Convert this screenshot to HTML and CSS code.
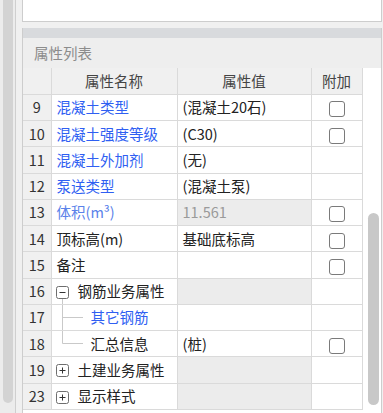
FILE: index.html
```html
<!DOCTYPE html>
<html lang="zh">
<head>
<meta charset="utf-8">
<title>属性列表</title>
<link rel="stylesheet" href="styles.css">
</head>
<body>
<div class="app">
  <div class="left-scroll"><div class="left-thumb"></div></div>
  <div class="main">
    <div class="top-panel"></div>
    <div class="prop-panel">
      <div class="band"></div>
      <div class="title">属性列表</div>
      <div class="grid-wrap">
        <table class="grid">
          <colgroup><col class="c-num"><col class="c-name"><col class="c-val"><col class="c-add"></colgroup>
          <tr class="head"><td></td><td>属性名称</td><td>属性值</td><td>附加</td></tr>
          <tr><td class="num">9</td><td class="name blue">混凝土类型</td><td class="val">(混凝土20石)</td><td class="add"><span class="cb"></span></td></tr>
          <tr><td class="num">10</td><td class="name blue">混凝土强度等级</td><td class="val">(C30)</td><td class="add"><span class="cb"></span></td></tr>
          <tr><td class="num">11</td><td class="name blue">混凝土外加剂</td><td class="val">(无)</td><td class="add"></td></tr>
          <tr><td class="num">12</td><td class="name blue">泵送类型</td><td class="val">(混凝土泵)</td><td class="add"></td></tr>
          <tr><td class="num">13</td><td class="name light-blue">体积(m³)</td><td class="val ro">11.561</td><td class="add"><span class="cb"></span></td></tr>
          <tr><td class="num">14</td><td class="name">顶标高(m)</td><td class="val">基础底标高</td><td class="add"><span class="cb"></span></td></tr>
          <tr><td class="num">15</td><td class="name">备注</td><td class="val"></td><td class="add"><span class="cb"></span></td></tr>
          <tr><td class="num">16</td><td class="name tree"><div class="tcell"><svg class="ico" width="26" height="27" viewBox="0 0 26 27"><line x1="10.5" y1="20" x2="10.5" y2="27" stroke="#c9c9c9"/><rect x="4.5" y="8.5" width="12" height="12" rx="2" fill="#fff" stroke="#6e6e6e"/><line x1="7.5" y1="14.5" x2="13.5" y2="14.5" stroke="#333"/></svg><span>钢筋业务属性</span></div></td><td class="val ro"></td><td class="add"></td></tr>
          <tr><td class="num">17</td><td class="name tree"><div class="tcell"><svg class="ico" width="39" height="27" viewBox="0 0 39 27"><line x1="10.5" y1="0" x2="10.5" y2="27" stroke="#c9c9c9"/><line x1="10.5" y1="13.5" x2="31" y2="13.5" stroke="#c9c9c9"/></svg><span class="blue">其它钢筋</span></div></td><td class="val"></td><td class="add"></td></tr>
          <tr><td class="num">18</td><td class="name tree"><div class="tcell"><svg class="ico" width="39" height="27" viewBox="0 0 39 27"><line x1="10.5" y1="0" x2="10.5" y2="13.5" stroke="#c9c9c9"/><line x1="10.5" y1="13.5" x2="31" y2="13.5" stroke="#c9c9c9"/></svg><span>汇总信息</span></div></td><td class="val">(桩)</td><td class="add"><span class="cb"></span></td></tr>
          <tr><td class="num">19</td><td class="name tree"><div class="tcell"><svg class="ico" width="26" height="27" viewBox="0 0 26 27"><rect x="4.5" y="8.5" width="12" height="12" rx="2" fill="#fff" stroke="#6e6e6e"/><line x1="7.5" y1="14.5" x2="13.5" y2="14.5" stroke="#333"/><line x1="10.5" y1="11.5" x2="10.5" y2="17.5" stroke="#333"/></svg><span>土建业务属性</span></div></td><td class="val ro"></td><td class="add"></td></tr>
          <tr><td class="num">23</td><td class="name tree"><div class="tcell"><svg class="ico" width="26" height="27" viewBox="0 0 26 27"><rect x="4.5" y="8.5" width="12" height="12" rx="2" fill="#fff" stroke="#6e6e6e"/><line x1="7.5" y1="14.5" x2="13.5" y2="14.5" stroke="#333"/><line x1="10.5" y1="11.5" x2="10.5" y2="17.5" stroke="#333"/></svg><span>显示样式</span></div></td><td class="val ro"></td><td class="add"></td></tr>
        </table>
        <div class="right-scroll"><div class="right-thumb"></div></div>
      </div>
    </div>
  </div>
</div>
</body>
</html>
```

FILE: styles.css
```css
html, body {
  margin: 0;
  padding: 0;
}
body {
  width: 383px;
  height: 413px;
  overflow: hidden;
  background: #efefef;
  font-family: "Microsoft YaHei", "Noto Sans CJK SC", "Noto Sans", sans-serif;
  font-size: 14.5px;
  color: #222;
}
.app {
  display: flex;
  height: 413px;
}
.left-scroll {
  width: 16px;
  flex: none;
  box-sizing: border-box;
  padding-left: 3px;
  background: #ececec;
  border-right: 1px solid #cfcfcf;
}
.left-thumb {
  width: 10px;
  height: 403px;
  background: #d3d3d3;
  border-radius: 0 0 5px 5px;
}
.main {
  flex: 1;
  min-width: 0;
  display: flex;
  flex-direction: column;
  background: #f0f0f0;
  padding-left: 6px;
}
.top-panel {
  height: 21px;
  flex: none;
  background: #fff;
  border: 1px solid #cdcdcd;
  border-top: none;
  margin-right: 1px;
}
.prop-panel {
  margin-top: 6px;
  flex: 1;
  min-height: 0;
  display: flex;
  flex-direction: column;
  border-left: 1px solid #cdcdcd;
  border-right: 1px solid #cdcdcd;
  margin-right: 1px;
  background: #fff;
}
.band {
  height: 10px;
  flex: none;
  background: #d8dadd;
}
.title {
  height: 30px;
  flex: none;
  background: #eeeeee;
  color: #8c8c8c;
  line-height: 29px;
  padding-left: 11px;
}
.grid-wrap {
  flex: 1;
  min-height: 0;
  display: flex;
  background: #fff;
}
.grid {
  border-collapse: collapse;
  table-layout: fixed;
  width: 339px;
  flex: none;
  align-self: flex-start;
}
.c-num { width: 28px; }
.c-name { width: 126px; }
.c-val { width: 134px; }
.c-add { width: 51px; }
.grid tr {
  height: 26.25px;
}
.grid td {
  border: 1px solid #dadada;
  padding: 0;
  white-space: nowrap;
  overflow: hidden;
  line-height: 20px;
}
.grid tr:first-child td {
  border-top: none;
}
.grid td:first-child {
  border-left: none;
}
.head td {
  background: #f0f0f0;
  text-align: center;
  color: #444;
}
.num {
  background: #f0f0f0;
  text-align: center;
  color: #333;
}
.name {
  padding-left: 5px !important;
}
.name.tree {
  padding-left: 0 !important;
}
.blue {
  color: #2f5ff2;
}
.light-blue {
  color: #5a82ea;
}
.val {
  padding-left: 5px !important;
  color: #222;
}
.val.ro {
  background: #ececec;
  color: #9a9a9a;
}
.add {
  text-align: center;
}
.cb {
  display: inline-block;
  width: 14px;
  height: 14px;
  border: 1px solid #7a7a7a;
  border-radius: 3px;
  background: #fff;
  vertical-align: middle;
}
.tcell {
  display: flex;
  align-items: center;
  height: 25px;
  overflow: hidden;
}
.ico {
  flex: none;
  display: block;
}
.right-scroll {
  flex: 1;
  background: #fff;
  padding-left: 5px;
  padding-top: 145px;
}
.right-thumb {
  width: 11px;
  height: 192px;
  background: #c8c8c8;
  border-radius: 5.5px;
}
```
